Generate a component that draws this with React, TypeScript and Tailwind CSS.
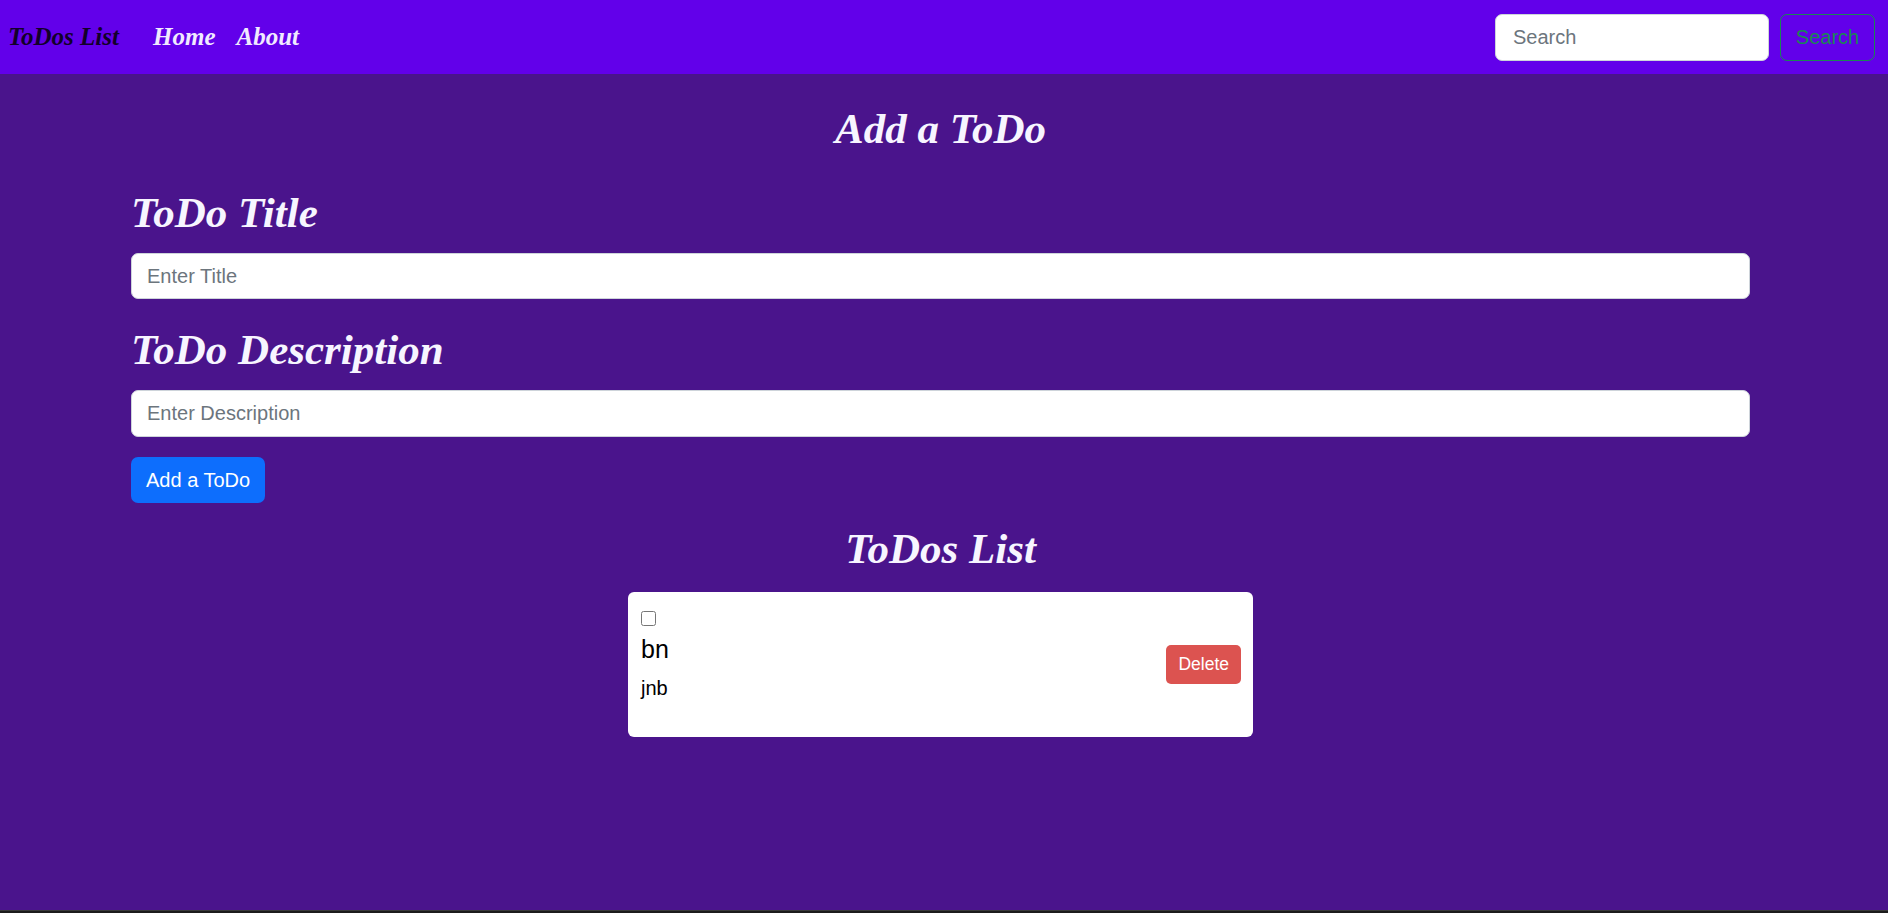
import React from "react";

const serif = "font-['Liberation_Serif',serif] font-bold italic";
const sans = "font-['Liberation_Sans',Arial,sans-serif]";
const heading = `${serif} text-[43px] leading-[48px] text-[#f7f5ff]`;

function Navbar() {
  return (
    <nav className="h-[74px] bg-[#6200ea] flex items-center justify-between pl-[8px] pr-[13px]">
      <div className={`flex items-center ${serif} text-[25px] leading-[30px]`}>
        <span className="text-[#12002a] w-[145px]">ToDos List</span>
        <a className="text-[#f1eaff]">Home</a>
        <a className="text-[#f1eaff] ml-[21px]">About</a>
      </div>
      <div className={`flex items-center gap-[11px] ${sans}`}>
        <input
          placeholder="Search"
          className="w-[274px] h-[47px] bg-white rounded-[7px] border border-[#ced4da] px-[17px] text-[20px] placeholder:text-[#6c757d] outline-none"
        />
        <button className="w-[95px] h-[47px] rounded-[7px] border border-[#198754] text-[#198754] text-[20px]">
          Search
        </button>
      </div>
    </nav>
  );
}

function TodoItem({ title, desc }: { title: string; desc: string }) {
  return (
    <div className={`w-[625px] mx-auto bg-white rounded-[6px] flex items-center justify-between pl-[13px] pr-[12px] pt-[19px] pb-[34px] ${sans}`}>
      <div className="flex flex-col">
        <input type="checkbox" className="w-[15px] h-[15px] m-0" />
        <h5 className="mt-[8px] text-[25px] leading-[30px] text-black">{title}</h5>
        <p className="mt-[9px] text-[20px] leading-[30px] text-black">{desc}</p>
      </div>
      <button className="h-[39px] px-[12px] rounded-[5px] bg-[#dc5350] text-white text-[17.5px] -mb-[15px]">
        Delete
      </button>
    </div>
  );
}

export default function App() {
  return (
    <div className="h-[913px] flex flex-col bg-[#4a148c]">
      <Navbar />
      <main className="flex-1 pl-[131px] pr-[138px]">
        <h2 className={`${heading} text-center mt-[31px]`}>Add a ToDo</h2>
        <h2 className={`${heading} mt-[36px]`}>ToDo Title</h2>
        <input
          placeholder="Enter Title"
          className={`${sans} mt-[16px] w-full h-[46px] bg-white rounded-[7px] border border-[#ced4da] px-[15px] text-[20px] placeholder:text-[#6c757d] outline-none block`}
        />
        <h2 className={`${heading} mt-[27px]`}>ToDo Description</h2>
        <input
          placeholder="Enter Description"
          className={`${sans} mt-[16px] w-full h-[47px] bg-white rounded-[7px] border border-[#ced4da] px-[15px] text-[20px] placeholder:text-[#6c757d] outline-none block`}
        />
        <button className={`${sans} mt-[20px] h-[46px] px-[15px] rounded-[7px] bg-[#0d6efd] text-white text-[20px] block`}>
          Add a ToDo
        </button>
        <h2 className={`${heading} text-center mt-[22px]`}>ToDos List</h2>
        <div className="mt-[19px]">
          <TodoItem title="bn" desc="jnb" />
        </div>
      </main>
      <div className="h-[3px] bg-[#1c1c1c] border-t border-[#3a3a3a]" />
    </div>
  );
}
